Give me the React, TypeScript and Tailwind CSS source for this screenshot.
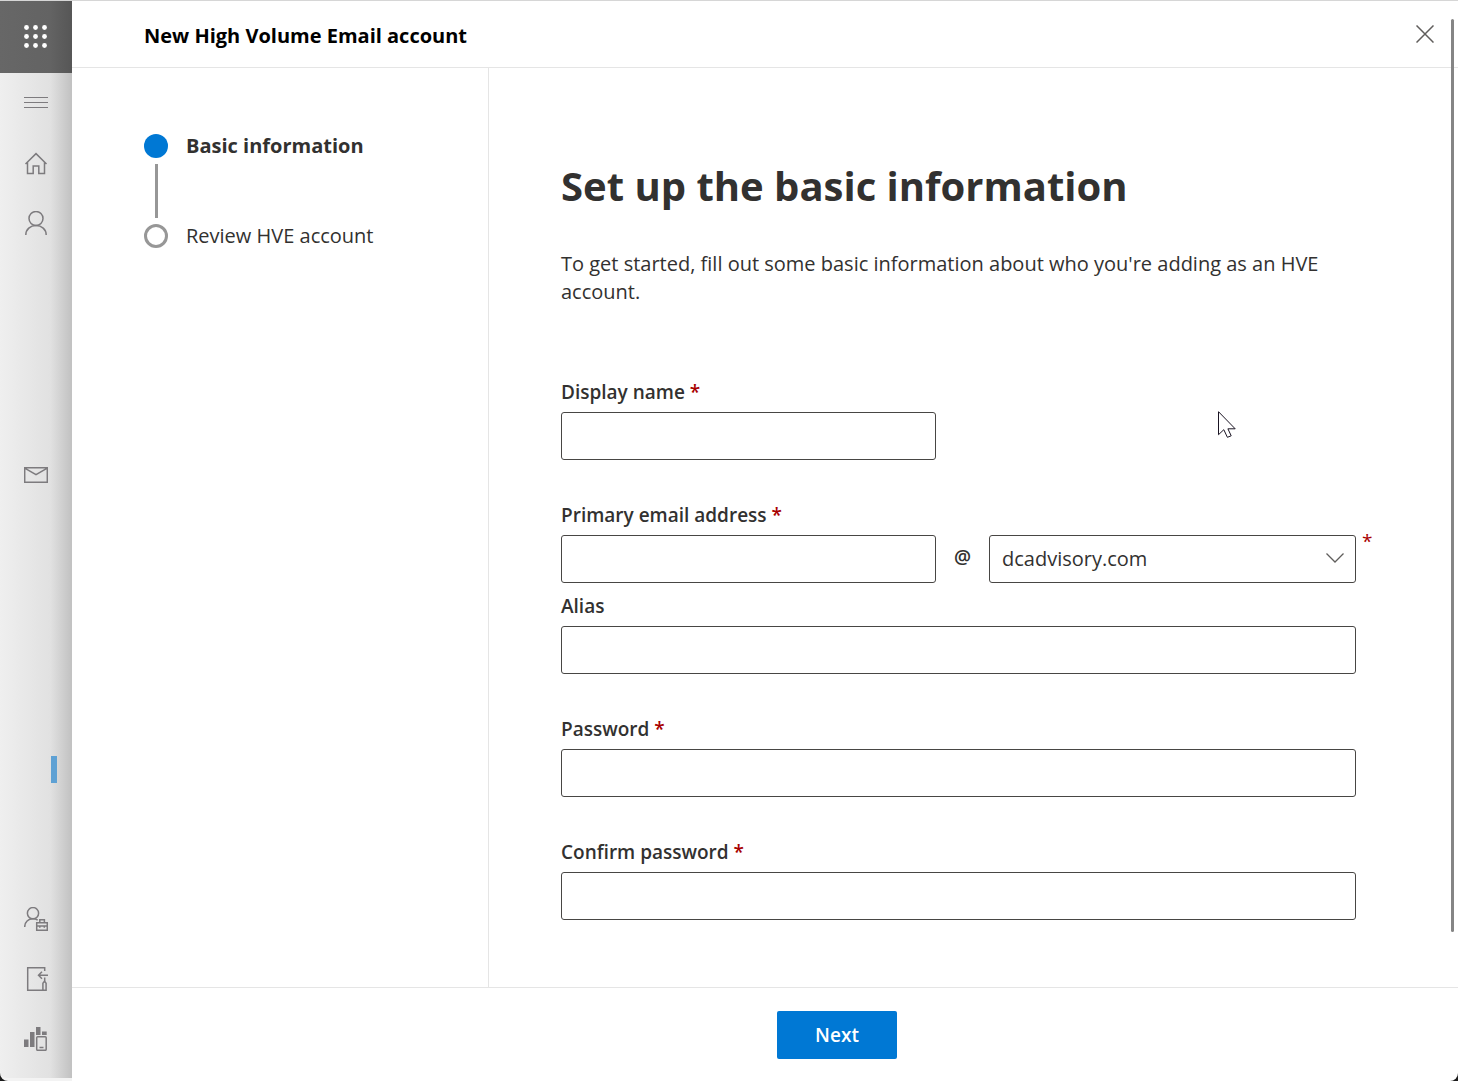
import React from 'react'

type FieldProps = {
  id: string
  label: string
  type?: string
  required?: boolean
  className?: string
}

const steps = [
  { label: 'Basic information', active: true },
  { label: 'Review HVE account', active: false },
]

function Label({ htmlFor, required, children }: { htmlFor: string; required?: boolean; children: React.ReactNode }) {
  return (
    <label htmlFor={htmlFor} className="mb-1.5 block text-[19px] leading-7 font-semibold">
      {children}
      {required && <span className="text-[#a80000]"> *</span>}
    </label>
  )
}

function Field({ id, label, type = 'text', required, className = 'w-full' }: FieldProps) {
  return (
    <div>
      <Label htmlFor={id} required={required}>{label}</Label>
      <input
        id={id}
        type={type}
        className={`${className} block h-12 rounded-[3px] border border-[#484644] bg-white px-3 text-xl outline-none`}
      />
    </div>
  )
}

function RailButton({ label, children }: { label: string; children: React.ReactNode }) {
  return (
    <button type="button" aria-label={label} className="flex h-15 w-full items-center justify-center">
      <svg width="24" height="24" viewBox="0 0 24 24" fill="none" stroke="currentColor" strokeWidth="1.5">
        {children}
      </svg>
    </button>
  )
}

function Rail() {
  return (
    <aside className="flex w-18 shrink-0 flex-col rounded-bl-lg border-b-3 border-[#f3f3f3] bg-linear-to-r from-[#efefef] via-[#e1e1e1] via-70% to-[#c1c1c1] text-[#7d7b7e]">
      <button
        type="button"
        aria-label="App launcher"
        className="flex h-18 items-center justify-center bg-linear-to-r from-[#676767] via-[#636363] via-70% to-[#565656] text-white"
      >
        <svg width="24" height="24" viewBox="0 0 24 24" fill="currentColor">
          {[3, 12, 21].map((y) => [3, 12, 21].map((x) => <circle key={`${x}-${y}`} cx={x - 0.5} cy={y - 0.5} r="2.4" />))}
        </svg>
      </button>
      <nav className="flex flex-1 flex-col pb-[9px]">
        <RailButton label="Menu">
          <path d="M0 6.5h24M0 11.5h24M0 16.5h24" strokeWidth="1" />
        </RailButton>
        <RailButton label="Home">
          <path d="M1.500 13L12 2.600 22.500 13M3.500 11.300v11.200h5.700v-7.600h5.600v7.600h5.700V11.300" />
        </RailButton>
        <RailButton label="Users">
          <circle cx="12" cy="7.500" r="7" />
          <path d="M1.800 24c0-5.600 4.600-9.500 10.200-9.500S22.200 18.400 22.200 24" />
        </RailButton>
        <div className="mt-48">
          <RailButton label="Mail">
            <path d="M.7 4.700h22.600v14.600H.7zM.7 5.200L12 11.700l11.300-6.500" />
          </RailButton>
        </div>
        <div className="my-auto flex justify-end pt-36 pr-[15px]">
          <span className="h-[27px] w-1.5 bg-[#5ea1d4]" />
        </div>
        <RailButton label="Roles">
          <circle cx="9" cy="6.200" r="5.600" />
          <path d="M.7 20c0-5.200 3.600-8.200 8.300-8.200 1.800 0 3.400.5 4.700 1.300" />
          <path d="M12.700 15.700h10.600v7.600H12.700zM15.800 15.700v-2.900h4.600v2.900M13 19h10M15.800 18.200v2.600M20.300 18.200v2.600" />
        </RailButton>
        <RailButton label="Setup">
          <path d="M20.700 4V.8H3.700v22.500h15.500M20.700 10.500v4M24 8.300H14.500M18 4.800l-3.500 3.500 3.500 3.500" />
          <path d="M18.900 23.300v-7l1.600-2 1.600 2v7z" />
        </RailButton>
        <RailButton label="Reports">
          <path d="M0 12.500h4.500V20H0zM6 5h4.500v15H6zM12 0h4.500v8H12zM18 4.500h4.700V8H18z" fill="currentColor" stroke="none" />
          <rect x="12.700" y="9.700" width="9.500" height="13.600" rx="1" />
          <path d="M15.500 20.500h4" />
        </RailButton>
      </nav>
    </aside>
  )
}

function Steps() {
  return (
    <ol className="w-[417px] shrink-0 border-r border-[#e5e5e5] pt-16 pl-18">
      {steps.map((step, i) => (
        <li key={step.label}>
          {i > 0 && <div className="my-1 ml-[11px] h-[54px] w-[3px] bg-[#979797]" />}
          <div className="flex h-7 items-center gap-[18px]">
            <span className={step.active ? 'size-6 rounded-full bg-[#0078d4]' : 'size-6 rounded-full border-3 border-[#979797]'} />
            <span className={step.active ? 'text-xl font-bold' : 'text-xl'}>{step.label}</span>
          </div>
        </li>
      ))}
    </ol>
  )
}

export default function App() {
  return (
    <div className="flex min-h-screen bg-[#1b1b1b] font-['Open_Sans','Noto_Sans',sans-serif] text-[#323130]">
      <div className="flex flex-1 rounded-b-lg border-t border-[#d6d6d6]">
        <Rail />
        <div className="relative flex min-w-0 flex-1 flex-col rounded-br-lg bg-white">
          <header className="flex h-[67px] items-center justify-between border-b border-[#e5e5e5] pr-6 pl-18">
            <h2 className="pt-1 text-xl leading-7 font-bold text-black">New High Volume Email account</h2>
            <button type="button" aria-label="Close">
              <svg width="18" height="18" viewBox="0 0 18 18" stroke="#605e5c" strokeWidth="1.5">
                <path d="M.5.5l17 17M17.500.5l-17 17" />
              </svg>
            </button>
          </header>

          <div className="flex flex-1">
            <Steps />
            <main className="min-w-0 flex-1 pt-[90px] pr-[102px] pb-[67px] pl-18">
              <h1 className="text-[40px] leading-14 font-bold">Set up the basic information</h1>
              <p className="mt-9 text-xl leading-7">
                To get started, fill out some basic information about who you're adding as an HVE account.
              </p>

              <form className="mt-18 flex flex-col gap-[41px]">
                <Field id="displayName" label="Display name" required className="w-[375px]" />
                <div className="flex flex-col gap-[9px]">
                  <div className="flex items-end">
                    <Field id="email" label="Primary email address" required className="w-[375px]" />
                    <span className="flex h-12 w-[53px] items-center justify-center pb-1 text-[19px] font-semibold">@</span>
                    <div className="relative flex-1">
                      <select
                        aria-label="Domain"
                        className="block h-12 w-full appearance-none rounded-[3px] border border-[#484644] bg-white px-3 text-xl outline-none"
                      >
                        <option>dcadvisory.com</option>
                      </select>
                      <svg
                        width="18"
                        height="10"
                        viewBox="0 0 18 10"
                        fill="none"
                        stroke="#605e5c"
                        strokeWidth="1.3"
                        className="pointer-events-none absolute top-[18px] right-3"
                      >
                        <path d="M.5.5L9 9l8.500-8.500" />
                      </svg>
                      <span className="absolute -top-2 left-full ml-1.5 text-[19px] leading-7 text-[#a80000]">*</span>
                    </div>
                  </div>
                  <Field id="alias" label="Alias" />
                </div>
                <Field id="password" label="Password" type="password" required />
                <Field id="confirmPassword" label="Confirm password" type="password" required />
              </form>
            </main>
          </div>

          <footer className="flex h-[94px] items-center justify-center border-t border-[#e5e5e5] pl-36">
            <button type="button" className="h-12 w-30 rounded-xs bg-[#0078d4] pt-0.5 text-[19px] font-semibold text-white">
              Next
            </button>
          </footer>

          {/* scroll thumb */}
          <div className="absolute top-[18px] right-1 bottom-[149px] w-[3px] rounded-full bg-[#858585]" />
          {/* pointer */}
          <svg width="19" height="28" viewBox="0 0 19 28" className="absolute top-[410px] right-[221px]" fill="#fff" stroke="#1a1423">
            <path d="M.5.700v23l5.300-5 3.600 7.600 3.800-1.500-3.300-7h7.300z" />
          </svg>
        </div>
      </div>
    </div>
  )
}
